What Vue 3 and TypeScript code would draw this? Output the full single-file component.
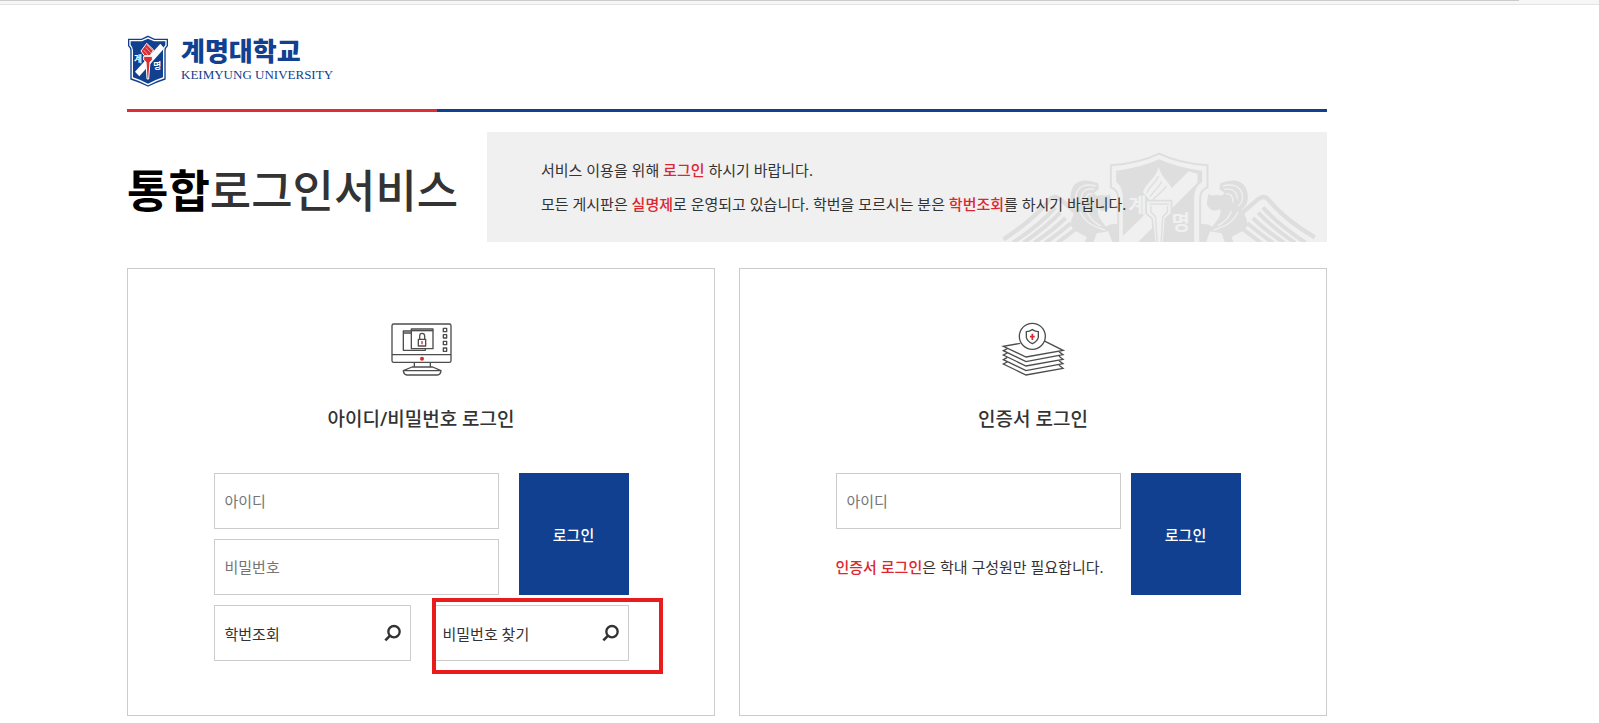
<script setup lang="ts">
import { ref } from 'vue'

interface Lookup {
  label: string
  highlighted: boolean
}

const userId = ref('')
const password = ref('')
const certId = ref('')

const lookups: Lookup[] = [
  { label: '학번조회', highlighted: false },
  { label: '비밀번호 찾기', highlighted: true },
]
</script>

<template>
  <div class="page">
    <div class="strip"><div class="strip-line"></div></div>
    <div class="container">
      <header class="header">
        <a class="logo" href="#">
          <svg class="emblem" viewBox="20 28 126 156" aria-hidden="true">
            <path d="M83 32 L102 41 L141 41 V60 Q134 66 134 74 V160 Q108 168 83 181 Q58 168 32 160 V74 Q32 66 25 60 V41 L64 41 Z" fill="#fff" stroke="#10408f" stroke-width="4" />
            <path d="M83 39 L101 47 H135 V58 Q128 65 128 74 V155 Q104 163 83 174 Q62 163 38 155 V74 Q38 65 31 58 V47 H65 Z" fill="#10408f" />
            <path d="M120 54 L132 68 L57 152 L44 138 Z" fill="#fff" />
            <path d="M62 76 L79 53 L100 73 L89 90 H72 Z" fill="#dc2f34" stroke="#fff" stroke-width="3" />
            <path d="M70 73 L83 88 M76 65 L91 81 M80 58 L97 75" stroke="#fff" stroke-width="1.5" />
            <path d="M70 92 H96 V103 L89 109 L85 160 H80 L77 109 L70 103 Z" fill="#dc2f34" stroke="#fff" stroke-width="3" />
            <text x="41" y="108" class="emblem-text">계</text>
            <text x="99" y="130" class="emblem-text">명</text>
          </svg>
          <span class="logo-words">
            <span class="logo-ko">계명대학교</span>
            <span class="logo-en">KEIMYUNG UNIVERSITY</span>
          </span>
        </a>
      </header>
      <div class="rule"><div class="rule-accent"></div></div>

      <section class="intro">
        <h1><strong>통합</strong>로그인서비스</h1>
        <div class="notice">
          <svg class="crest" viewBox="60 66 950 270" aria-hidden="true">
            <g fill="none" stroke="#dedede" stroke-linejoin="round">
              <path d="M70 328 Q160 270 212 206 Q224 196 238 206 L300 258" stroke-width="13" />
              <path d="M98 338 Q180 284 226 232 M130 338 Q200 290 240 248 M162 338 Q220 300 256 264 M196 338 Q240 308 272 280 M232 338 L288 296" stroke-width="12" />
              <path d="M1004 322 Q914 270 862 206 Q850 196 836 206 L774 258" stroke-width="13" />
              <path d="M976 338 Q894 284 848 232 M944 338 Q874 290 834 248 M912 338 Q854 300 818 264 M878 338 Q834 308 802 280 M842 338 L786 296" stroke-width="12" />
            </g>
            <g>
              <path d="M354 160 C320 146 290 148 278 172 C266 196 268 226 290 238 C278 256 268 276 274 290 C286 308 306 310 320 322 L314 336 H340 L350 310 L384 304 L396 336 H424 L430 276 C412 288 396 276 378 290 C360 268 350 256 354 236 C372 248 388 240 394 222 L390 192 C376 202 362 190 352 198 L340 190 L356 178 Z" fill="#dedede" />
              <path d="M346 168 C318 160 294 168 288 192 C284 210 292 222 300 228 M342 178 C320 172 304 184 302 208 M336 192 C320 190 314 202 316 218 M300 246 C316 276 334 288 374 300 M320 244 C328 266 342 278 362 288 M346 316 L378 310" fill="none" stroke="#f0f0f0" stroke-width="4" />
            </g>
            <g>
              <path d="M720 160 C754 146 784 148 796 172 C808 196 806 226 784 238 C796 256 806 276 800 290 C788 308 768 310 754 322 L760 336 H734 L724 310 L690 304 L678 336 H650 L644 276 C662 288 678 276 696 290 C714 268 724 256 720 236 C702 248 686 240 680 222 L684 192 C698 202 712 190 722 198 L734 190 L718 178 Z" fill="#dedede" />
              <path d="M728 168 C756 160 780 168 786 192 C790 210 782 222 774 228 M732 178 C754 172 770 184 772 208 M738 192 C754 190 760 202 758 218 M774 246 C758 276 740 288 700 300 M754 244 C746 266 732 278 712 288 M728 316 L696 310" fill="none" stroke="#f0f0f0" stroke-width="4" />
            </g>
            <path d="M392 106 Q478 100 537 71 Q596 100 682 106 V172 Q660 180 660 204 V340 H414 V204 Q414 180 392 172 Z" fill="#f0f0f0" stroke="#dedede" stroke-width="6" />
            <path d="M408 122 Q480 114 537 88 Q594 114 666 122 V156 Q642 170 642 204 V340 H428 V204 Q428 170 408 156 Z" fill="#dedede" />
            <path d="M626 124 L652 132 V158 L470 340 H428 V318 Z" fill="#f0f0f0" />
            <path d="M488 186 C500 154 530 142 535 110 C544 146 570 154 580 188 L560 212 H510 Z" fill="#f0f0f0" />
            <path d="M500 188 C510 166 530 154 535 138 M510 200 C520 182 540 170 544 154 M518 210 C532 192 550 184 558 168" fill="none" stroke="#dedede" stroke-width="4" />
            <path d="M498 212 H574 V250 L556 266 L550 340 H524 L516 266 L498 250 Z" fill="#f0f0f0" stroke="#dedede" stroke-width="5" />
            <path d="M508 222 H566 M512 228 V246 L526 260 L531 336 M562 228 V246 L548 260 L543 336" fill="none" stroke="#dedede" stroke-width="4" />
            <text x="444" y="250" class="crest-text">계</text>
            <text x="574" y="300" class="crest-text">명</text>
          </svg>
          <p>서비스 이용을 위해 <em>로그인</em> 하시기 바랍니다.</p>
          <p>모든 게시판은 <em>실명제</em>로 운영되고 있습니다. 학번을 모르시는 분은 <em>학번조회</em>를 하시기 바랍니다.</p>
        </div>
      </section>

      <main class="panels">
        <section class="panel">
          <svg class="icon" viewBox="57 36 192 168" fill="none" stroke="#4d4d4d" stroke-width="4" stroke-linejoin="round" aria-hidden="true">
            <rect x="66" y="42" width="177" height="115" rx="5" />
            <path d="M66 134 H243 M133 157 V171 M181 157 V171 M126 171 H188 L213 182 Q212 194 202 195 H111 Q101 194 100 182 Z M101 182 H212" />
            <path d="M124 63 H100 V121 H166 V116 M100 69 H124" />
            <rect x="124" y="57" width="65" height="59" />
            <path d="M124 62 H189" />
            <g>
              <rect x="220" y="55" width="10" height="10" /><rect x="220" y="74" width="10" height="10" />
              <rect x="220" y="94" width="10" height="10" /><rect x="220" y="114" width="10" height="10" />
            </g>
            <path d="M149 88 V78 Q149 70 156 70 Q164 70 164 78 V88" />
            <rect x="145" y="88" width="22" height="20" />
            <path d="M156 93 V103" stroke="#e0262c" />
            <circle cx="156" cy="146" r="6" fill="#e0262c" stroke="none" />
          </svg>
          <h2>아이디/비밀번호 로그인</h2>
          <form class="form" @submit.prevent>
            <div class="credentials">
              <div class="fields">
                <input v-model="userId" type="text" placeholder="아이디" aria-label="아이디" />
                <input v-model="password" type="password" placeholder="비밀번호" aria-label="비밀번호" />
              </div>
              <button class="login" type="submit">로그인</button>
            </div>
            <div class="lookups">
              <div v-for="item in lookups" :key="item.label" class="lookup-cell">
                <button class="lookup" type="button">
                  <span>{{ item.label }}</span>
                  <svg class="search" viewBox="553 492 54 54" fill="none" stroke="#333" aria-hidden="true">
                    <circle cx="583" cy="515" r="17" stroke-width="7" />
                    <path d="M572 526 L557 541" stroke-width="8" />
                  </svg>
                </button>
                <div v-if="item.highlighted" class="highlight"></div>
              </div>
            </div>
          </form>
        </section>

        <section class="panel">
          <svg class="icon" viewBox="64 36 192 168" fill="none" stroke="#4d4d4d" stroke-width="4" aria-hidden="true">
            <path d="M122 100 L71 109 L139 141 L250 121 L192 92" />
            <path d="M83 116 L71 122 L139 155 L250 134 L238 125" />
            <path d="M83 129 L71 135 L139 168 L250 148 L238 139" />
            <path d="M83 142 L71 149 L139 182 L250 161 L238 152" />
            <path d="M83 156 L71 162 L139 195 L250 175 L238 166" />
            <circle cx="158" cy="79" r="39" fill="#fff" />
            <path d="M158 59 Q167 65 176 65 V82 Q173 94 158 101 Q143 94 140 82 V65 Q149 65 158 59 Z" />
            <path d="M158 71 V90 M151 80 H165" stroke="#e0262c" stroke-width="5" />
          </svg>
          <h2>인증서 로그인</h2>
          <form class="form form-cert" @submit.prevent>
            <div class="credentials">
              <div class="fields">
                <input v-model="certId" type="text" placeholder="아이디" aria-label="아이디" />
                <p class="hint"><em>인증서 로그인</em>은 학내 구성원만 필요합니다.</p>
              </div>
              <button class="login" type="submit">로그인</button>
            </div>
          </form>
        </section>
      </main>
    </div>
  </div>
</template>

<style>
body {
  background: #fff;
}
</style>

<style scoped>
* {
  box-sizing: border-box;
}

.page,
.page input,
.page button {
  font-family: "Noto Sans", "Noto Sans CJK KR", sans-serif;
  font-size: 15px;
  color: #333;
}

.page em {
  font-style: normal;
  font-weight: 500;
  color: #dd2730;
}

.strip {
  height: 5px;
  background: #f6f6f6;
  border-bottom: 1px solid #e4e4e4;
}

.strip-line {
  width: 95%;
  height: 1px;
  background: #cbcbcb;
}

.container {
  max-width: 1200px;
  margin-left: 127px;
}

.header {
  height: 104px;
  padding-top: 30px;
}

.logo {
  display: inline-flex;
  gap: 12px;
  color: #10408f;
  text-decoration: none;
}

.emblem {
  width: 42px;
  height: 52px;
}

.emblem-text {
  font-size: 26px;
  font-weight: 700;
  fill: #fff;
}

.logo-words {
  display: flex;
  flex-direction: column;
}

.logo-ko {
  font-size: 26px;
  font-weight: 900;
  line-height: 32px;
}

.logo-en {
  font-family: "Liberation Serif", serif;
  font-size: 13px;
  line-height: 16px;
}

.rule {
  height: 3px;
  background: #10408f;
}

.rule-accent {
  width: 310px;
  height: 3px;
  background: #dc2f34;
}

.intro {
  display: flex;
  margin-top: 20px;
}

h1 {
  flex: 0 0 360px;
  margin: 0;
  padding-top: 4px;
  font-size: 45px;
  font-weight: 500;
  line-height: 110px;
  white-space: nowrap;
}

h1 strong {
  font-weight: 700;
  color: #000;
}

.notice {
  position: relative;
  flex: 1;
  height: 110px;
  padding: 21px 54px;
  background: #f0f0f0;
}

.notice p {
  position: relative;
  margin: 0;
  line-height: 34px;
}

.crest {
  position: absolute;
  right: 10px;
  bottom: 0;
  width: 317px;
  height: 90px;
}

.crest-text {
  font-size: 60px;
  font-weight: 700;
  fill: #f0f0f0;
}

.panels {
  display: grid;
  grid-template-columns: 1fr 1fr;
  gap: 24px;
  margin-top: 22px;
}

.panel {
  display: flex;
  flex-direction: column;
  align-items: center;
  padding: 53px 0 54px;
  border: 1px solid #ccc;
}

.icon {
  width: 64px;
  height: 56px;
}

h2 {
  margin: 27px 0 40px;
  font-size: 19px;
  font-weight: 500;
  line-height: 28px;
}

.form {
  width: 415px;
}

.form-cert {
  padding-left: 10px;
}

.credentials {
  display: flex;
  gap: 20px;
}

.form-cert .credentials {
  gap: 10px;
}

.fields {
  display: flex;
  flex: 1;
  flex-direction: column;
  gap: 10px;
}

.fields input {
  width: 100%;
  height: 56px;
  padding: 0 10px;
  border: 1px solid #ccc;
  background: #fff;
}

.fields input::placeholder {
  color: #757575;
}

.hint {
  margin: 0;
  line-height: 56px;
  white-space: nowrap;
}

.page .login {
  flex: 0 0 110px;
  height: 122px;
  padding: 0;
  border: 0;
  font-weight: 500;
  color: #fff;
  background: #10408f;
}

.lookups {
  display: grid;
  grid-template-columns: 1fr 1fr;
  gap: 21px;
  margin-top: 10px;
}

.lookup-cell {
  position: relative;
}

.lookup {
  display: flex;
  align-items: center;
  justify-content: space-between;
  width: 100%;
  height: 56px;
  padding: 0 8px 0 10px;
  border: 1px solid #ccc;
  background: #fff;
}

.search {
  width: 18px;
  height: 18px;
}

.highlight {
  position: absolute;
  inset: -7px -34px -13px 0;
  border: 4px solid #e81c1c;
  pointer-events: none;
}
</style>
